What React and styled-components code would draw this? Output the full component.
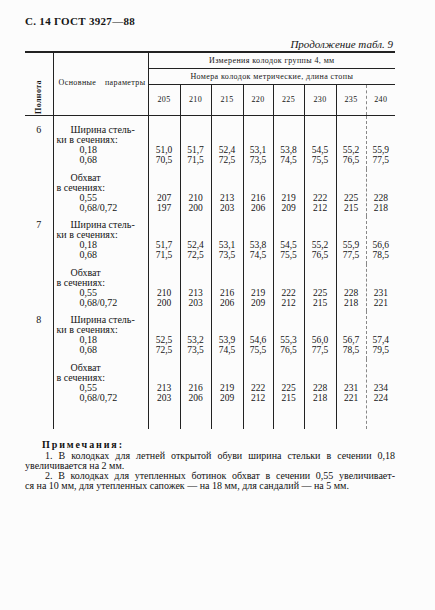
import React from 'react';
import styled, { createGlobalStyle } from 'styled-components';

const GlobalStyle = createGlobalStyle`
  html, body {
    margin: 0;
    background: #fcfcfc;
    color: #151515;
    font-family: "Liberation Serif", "DejaVu Serif", serif;
  }
`;

const sizes = ['205', '210', '215', '220', '225', '230', '235', '240'];
const colWidths = [32, 31, 32, 30, 31, 32, 30, 29];

const groups = [
   {
      fullness: '6',
      width: [
         ['51,0', '51,7', '52,4', '53,1', '53,8', '54,5', '55,2', '55,9'],
         ['70,5', '71,5', '72,5', '73,5', '74,5', '75,5', '76,5', '77,5'],
      ],
      girth: [
         ['207', '210', '213', '216', '219', '222', '225', '228'],
         ['197', '200', '203', '206', '209', '212', '215', '218'],
      ],
   },
   {
      fullness: '7',
      width: [
         ['51,7', '52,4', '53,1', '53,8', '54,5', '55,2', '55,9', '56,6'],
         ['71,5', '72,5', '73,5', '74,5', '75,5', '76,5', '77,5', '78,5'],
      ],
      girth: [
         ['210', '213', '216', '219', '222', '225', '228', '231'],
         ['200', '203', '206', '209', '212', '215', '218', '221'],
      ],
   },
   {
      fullness: '8',
      width: [
         ['52,5', '53,2', '53,9', '54,6', '55,3', '56,0', '56,7', '57,4'],
         ['72,5', '73,5', '74,5', '75,5', '76,5', '77,5', '78,5', '79,5'],
      ],
      girth: [
         ['213', '216', '219', '222', '225', '228', '231', '234'],
         ['203', '206', '209', '212', '215', '218', '221', '224'],
      ],
   },
];

const App = () => {
   const rows = [];
   groups.forEach((g, gi) => {
      const blocks = [
         { lines: ['Ширина стель-', 'ки в сечениях:', '0,18', '0,68'], values: g.width },
         { lines: ['Обхват', 'в сечениях:', '0,55', '0,68/0,72'], values: g.girth },
      ];
      blocks.forEach((b, bi) => {
         const first = gi === 0 && bi === 0;
         const last = gi === groups.length - 1 && bi === 1;
         rows.push(
            <Row key={`${gi}-${bi}`} $first={first} $last={last}>
               {bi === 0 && <FullnessCell rowSpan={2}>{g.fullness}</FullnessCell>}
               <ParamCell>
                  {b.lines.map((l, li) => (
                     <ParamLine key={li} $indent={li === 0 ? 16 : li === 1 ? 2 : 25}>{l}</ParamLine>
                  ))}
               </ParamCell>
               {sizes.map((s, ci) => (
                  <ValueCell key={s} $dashed={ci === 7}>
                     <div>{b.values[0][ci]}</div>
                     <div>{b.values[1][ci]}</div>
                  </ValueCell>
               ))}
            </Row>
         );
      });
   });

   return (
      <>
         <GlobalStyle />
         <Page>
            <RunningHead>С. 14 ГОСТ 3927—88</RunningHead>
            <Caption>Продолжение табл. 9</Caption>
            <Table>
               <colgroup>
                  <col style={{ width: 28 }} />
                  <col style={{ width: 95 }} />
                  {colWidths.map((w, i) => (
                     <col key={i} style={{ width: w }} />
                  ))}
               </colgroup>
               <thead>
                  <tr>
                     <HeadCell rowSpan={3} $align="bottom">
                        <Vertical>Полнота</Vertical>
                     </HeadCell>
                     <HeadCell rowSpan={3} $left>
                        <Spread>
                           <span>Основные</span>
                           <span>параметры</span>
                        </Spread>
                     </HeadCell>
                     <HeadCell colSpan={8} $left $h={15}>Измерения колодок группы 4, мм</HeadCell>
                  </tr>
                  <tr>
                     <HeadCell colSpan={8} $left $h={15}>Номера колодок метрические, длина стопы</HeadCell>
                  </tr>
                  <tr>
                     {sizes.map((s, i) => (
                        <HeadCell key={s} $left $dashed={i === 7} $h={30}>{s}</HeadCell>
                     ))}
                  </tr>
               </thead>
               <tbody>{rows}</tbody>
            </Table>
            <Notes>
               <NotesTitle>Примечания:</NotesTitle>
               <NoteLine $indent={20} $justify>1. В колодках для летней открытой обуви ширина стельки в сечении 0,18</NoteLine>
               <NoteLine>увеличивается на 2 мм.</NoteLine>
               <NoteLine $indent={20} $justify>2. В колодках для утепленных ботинок обхват в сечении 0,55 увеличивает-</NoteLine>
               <NoteLine>ся на 10 мм, для утепленных сапожек — на 18 мм, для сандалий — на 5 мм.</NoteLine>
            </Notes>
         </Page>
      </>
   );
};

const Page = styled.div`
   width: 370px;
   padding: 14px 40px 0 25px;
`;

const RunningHead = styled.div`
   font-size: 11px;
   font-weight: bold;
   line-height: 14px;
   letter-spacing: 0.3px;
`;

const Caption = styled.div`
   margin-top: 9px;
   padding-right: 2px;
   text-align: right;
   font-style: italic;
   font-size: 11px;
   line-height: 14px;
`;

const Table = styled.table`
   width: 370px;
   table-layout: fixed;
   border-collapse: collapse;
   border-top: 2px solid #222;
`;

const HeadCell = styled.th`
   padding: 0;
   height: ${(p) => (p.$h ? `${p.$h}px` : 'auto')};
   border-bottom: 1px solid #222;
   border-left: ${(p) => (p.$left ? (p.$dashed ? '1px dashed #888' : '1px solid #222') : 'none')};
   font-size: 8px;
   font-weight: normal;
   letter-spacing: 0.4px;
   line-height: 10px;
   text-align: center;
   vertical-align: ${(p) => p.$align || 'middle'};
   white-space: nowrap;
`;

const Vertical = styled.div`
   margin: 0 auto 1px;
   writing-mode: vertical-rl;
   transform: rotate(180deg);
   font-size: 8px;
   font-weight: bold;
   letter-spacing: 0.4px;
`;

const Spread = styled.div`
   display: flex;
   justify-content: space-between;
   padding: 0 2px 0 5px;
   margin-top: -2px;
`;

const Row = styled.tr`
   & > td {
      padding-top: ${(p) => (p.$first ? 9 : 4)}px;
      padding-bottom: ${(p) => (p.$last ? 26 : 3.6)}px;
   }
`;

const FullnessCell = styled.td`
   vertical-align: top;
   text-align: center;
   font-size: 10px;
   line-height: 10px;
`;

const ParamCell = styled.td`
   border-left: 1px solid #222;
   vertical-align: top;
   font-size: 10px;
   line-height: 10px;
`;

const ParamLine = styled.div`
   padding-left: ${(p) => p.$indent}px;
   white-space: nowrap;
`;

const ValueCell = styled.td`
   border-left: ${(p) => (p.$dashed ? '1px dashed #888' : '1px solid #222')};
   vertical-align: bottom;
   text-align: center;
   font-size: 9.5px;
   line-height: 10px;
`;

const Notes = styled.div`
   margin-top: 11px;
   font-size: 10px;
   line-height: 10px;
   color: #111;
`;

const NotesTitle = styled.div`
   padding-left: 17px;
   margin-bottom: 1px;
   letter-spacing: 1.9px;
   font-weight: bold;
`;

const NoteLine = styled.div`
   padding-left: ${(p) => p.$indent || 0}px;
   text-align: ${(p) => (p.$justify ? 'justify' : 'left')};
   text-align-last: ${(p) => (p.$justify ? 'justify' : 'auto')};
   white-space: nowrap;
`;

export default App;
